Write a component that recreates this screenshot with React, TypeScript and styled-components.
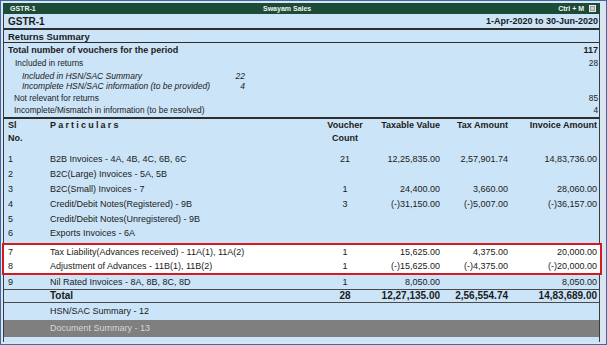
import styled, { createGlobalStyle } from "styled-components"

const GlobalStyle = createGlobalStyle`
  body {
    margin: 0;
    background: #ffffff;
  }
  * {
    box-sizing: border-box;
  }
`

const Window = styled.div`
  width: 607px;
  height: 345px;
  border: 1px solid #3f68a8;
  background: #d9e6f2;
  padding: 2px 6px 2px 2px;
  display: flex;
  flex-direction: column;
  font-family: "Liberation Sans", Arial, sans-serif;
  color: #1b1b1b;
  overflow: hidden;
`

const TitleBar = styled.div`
  height: 11px;
  flex: none;
  background: #1c4c37;
  color: #f2f2f2;
  font-size: 7px;
  font-weight: bold;
  display: grid;
  grid-template-columns: 253px auto 1fr;
  align-items: center;
  padding-left: 7px;
`

const TitleRight = styled.div`
  display: flex;
  justify-content: flex-end;
  align-items: center;
  gap: 5px;
  padding-right: 4px;
`

const Panel = styled.div`
  flex: 1;
  background: #cce4f7;
  border-left: 1px solid #3c3c3c;
  border-right: 1px solid #3c3c3c;
  display: flex;
  flex-direction: column;
`

const ReportHead = styled.div`
  height: 16px;
  flex: none;
  display: flex;
  justify-content: space-between;
  align-items: center;
  padding: 0 1px 0 4px;
  border-bottom: 2px solid #2e2e2e;
  font-weight: bold;
  font-size: 10px;
`

const Period = styled.span`
  font-size: 9px;
`

const SectionHead = styled.div`
  height: 13px;
  flex: none;
  display: flex;
  align-items: center;
  padding-left: 4px;
  border-bottom: 1px solid #2e2e2e;
  font-weight: bold;
  font-size: 9.5px;
`

const Summary = styled.div`
  flex: none;
  border-bottom: 2px solid #2e2e2e;
  padding-bottom: 1px;
`

const SummaryLine = styled.div<{ $h: number; $indent: number; $bold?: boolean }>`
  height: ${(p) => p.$h}px;
  display: flex;
  justify-content: space-between;
  align-items: center;
  padding: 0 1px 0 ${(p) => p.$indent}px;
  font-size: ${(p) => (p.$bold ? 9 : 8.3)}px;
  font-weight: ${(p) => (p.$bold ? "bold" : "normal")};
`

const SubLine = styled.div<{ $h: number }>`
  height: ${(p) => p.$h}px;
  width: 241px;
  display: flex;
  justify-content: space-between;
  align-items: center;
  padding-left: 18px;
  font-size: 8.5px;
  font-style: italic;
`

const grid = `
  display: grid;
  grid-template-columns: 42px 260px 70px 60px 68px 89px;
  padding-left: 4px;
`

const HeaderRow = styled.div`
  ${grid}
  height: 33px;
  flex: none;
  font-weight: bold;
  font-size: 9px;
  line-height: 13px;
`

const HeadCell = styled.div<{ $align?: string; $spaced?: boolean }>`
  text-align: ${(p) => p.$align ?? "left"};
  letter-spacing: ${(p) => (p.$spaced ? "2.2px" : "0")};
`

const Rows = styled.div`
  flex: none;
  padding-bottom: 2px;
`

const Row = styled.div<{ $h?: number; $total?: boolean; $rule?: boolean }>`
  ${grid}
  height: ${(p) => p.$h ?? 14.8}px;
  align-items: center;
  font-size: ${(p) => (p.$total ? 10 : 9)}px;
  font-weight: ${(p) => (p.$total ? "bold" : "normal")};
  border-bottom: ${(p) => (p.$rule ? "1px solid #4a4a4a" : "none")};
  flex: none;
`

const Cell = styled.div<{ $align?: string }>`
  text-align: ${(p) => p.$align ?? "left"};
  white-space: nowrap;
`

const Highlight = styled.div`
  flex: none;
  margin: 0 -3px 0 -2px;
  border: 2px solid #d4191f;
  background: #ffffff;
  padding-right: 1px;
`

const LinkRow = styled.div<{ $active?: boolean }>`
  height: 17px;
  flex: none;
  display: flex;
  align-items: center;
  padding-left: 46px;
  font-size: 9px;
  background: ${(p) => (p.$active ? "#7f7f7f" : "transparent")};
  color: ${(p) => (p.$active ? "#d6d6d6" : "#1b1b1b")};
`

type TLine = {
  no: string
  name: string
  count?: string
  taxable?: string
  tax?: string
  invoice?: string
}

const lines: TLine[] = [
  { no: "1", name: "B2B Invoices - 4A, 4B, 4C, 6B, 6C", count: "21", taxable: "12,25,835.00", tax: "2,57,901.74", invoice: "14,83,736.00" },
  { no: "2", name: "B2C(Large) Invoices - 5A, 5B" },
  { no: "3", name: "B2C(Small) Invoices - 7", count: "1", taxable: "24,400.00", tax: "3,660.00", invoice: "28,060.00" },
  { no: "4", name: "Credit/Debit Notes(Registered) - 9B", count: "3", taxable: "(-)31,150.00", tax: "(-)5,007.00", invoice: "(-)36,157.00" },
  { no: "5", name: "Credit/Debit Notes(Unregistered) - 9B" },
  { no: "6", name: "Exports Invoices - 6A" },
]

const advances: TLine[] = [
  { no: "7", name: "Tax Liability(Advances received) - 11A(1), 11A(2)", count: "1", taxable: "15,625.00", tax: "4,375.00", invoice: "20,000.00" },
  { no: "8", name: "Adjustment of Advances - 11B(1), 11B(2)", count: "1", taxable: "(-)15,625.00", tax: "(-)4,375.00", invoice: "(-)20,000.00" },
]

const LineCells = ({ line }: { line: TLine }) => (
  <>
    <Cell>{line.no}</Cell>
    <Cell>{line.name}</Cell>
    <Cell $align="center">{line.count}</Cell>
    <Cell $align="right">{line.taxable}</Cell>
    <Cell $align="right">{line.tax}</Cell>
    <Cell $align="right">{line.invoice}</Cell>
  </>
)

const CloseIcon = () => (
  <svg width="7" height="7" viewBox="0 0 7 7">
    <rect x="0.5" y="0.5" width="6" height="6" fill="#9a9a9a" stroke="#e8e8e8" />
    <rect x="2" y="2" width="3" height="3" fill="#d0d0d0" />
  </svg>
)

const App = () => {
  return (
    <>
      <GlobalStyle />
      <Window>
        <TitleBar>
          <span>GSTR-1</span>
          <span>Swayam Sales</span>
          <TitleRight>
            <span>Ctrl + M</span>
            <CloseIcon />
          </TitleRight>
        </TitleBar>

        <Panel>
          <ReportHead>
            <span>GSTR-1</span>
            <Period>1-Apr-2020 to 30-Jun-2020</Period>
          </ReportHead>
          <SectionHead>Returns Summary</SectionHead>

          <Summary>
            <SummaryLine $h={13} $indent={4} $bold>
              <span>Total number of vouchers for the period</span>
              <span>117</span>
            </SummaryLine>
            <SummaryLine $h={14} $indent={11}>
              <span>Included in returns</span>
              <span>28</span>
            </SummaryLine>
            <SubLine $h={11}>
              <span>Included in HSN/SAC Summary</span>
              <span>22</span>
            </SubLine>
            <SubLine $h={10}>
              <span>Incomplete HSN/SAC information (to be provided)</span>
              <span>4</span>
            </SubLine>
            <SummaryLine $h={13} $indent={10}>
              <span>Not relevant for returns</span>
              <span>85</span>
            </SummaryLine>
            <SummaryLine $h={12} $indent={10}>
              <span>Incomplete/Mismatch in information (to be resolved)</span>
              <span>4</span>
            </SummaryLine>
          </Summary>

          <HeaderRow>
            <HeadCell>
              Sl
              <br />
              No.
            </HeadCell>
            <HeadCell $spaced>Particulars</HeadCell>
            <HeadCell $align="center">
              Voucher
              <br />
              Count
            </HeadCell>
            <HeadCell $align="right">Taxable Value</HeadCell>
            <HeadCell $align="right">Tax Amount</HeadCell>
            <HeadCell $align="right">Invoice Amount</HeadCell>
          </HeaderRow>

          <Rows>
            {lines.map((line) => (
              <Row key={line.no}>
                <LineCells line={line} />
              </Row>
            ))}
          </Rows>

          <Highlight>
            {advances.map((line) => (
              <Row key={line.no} $h={14}>
                <LineCells line={line} />
              </Row>
            ))}
          </Highlight>

          <Row $h={15} $rule>
            <LineCells line={{ no: "9", name: "Nil Rated Invoices - 8A, 8B, 8C, 8D", count: "1", taxable: "8,050.00", invoice: "8,050.00" }} />
          </Row>
          <Row $h={13} $total $rule>
            <Cell />
            <Cell>Total</Cell>
            <Cell $align="center">28</Cell>
            <Cell $align="right">12,27,135.00</Cell>
            <Cell $align="right">2,56,554.74</Cell>
            <Cell $align="right">14,83,689.00</Cell>
          </Row>

          <LinkRow>HSN/SAC Summary - 12</LinkRow>
          <LinkRow $active>Document Summary - 13</LinkRow>
        </Panel>
      </Window>
    </>
  )
}

export default App
